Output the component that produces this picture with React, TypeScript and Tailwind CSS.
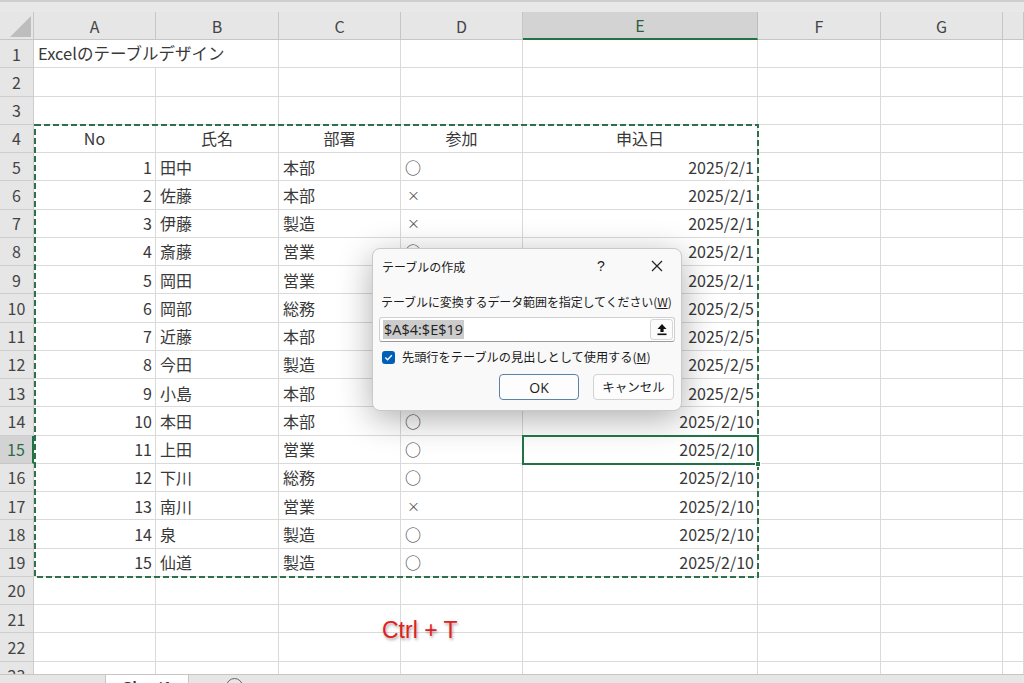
import React from "react";

type Align = "l" | "c" | "r";
type Cell = { t: string; a: Align };

const COLS = ["A", "B", "C", "D", "E", "F", "G", ""];

const people: [string, string, string, string][] = [
  ["田中", "本部", "○", "2025/2/1"],
  ["佐藤", "本部", "×", "2025/2/1"],
  ["伊藤", "製造", "×", "2025/2/1"],
  ["斎藤", "営業", "○", "2025/2/1"],
  ["岡田", "営業", "○", "2025/2/1"],
  ["岡部", "総務", "○", "2025/2/5"],
  ["近藤", "本部", "×", "2025/2/5"],
  ["今田", "製造", "○", "2025/2/5"],
  ["小島", "本部", "○", "2025/2/5"],
  ["本田", "本部", "○", "2025/2/10"],
  ["上田", "営業", "○", "2025/2/10"],
  ["下川", "総務", "○", "2025/2/10"],
  ["南川", "営業", "×", "2025/2/10"],
  ["泉", "製造", "○", "2025/2/10"],
  ["仙道", "製造", "○", "2025/2/10"],
];

// 行ごとのセル内容 (A〜E)
function rowCells(r: number): (Cell | null)[] {
  if (r === 1) return [{ t: "Excelのテーブルデザイン", a: "l" }, null, null, null, null];
  if (r === 4)
    return [
      { t: "No", a: "c" },
      { t: "氏名", a: "c" },
      { t: "部署", a: "c" },
      { t: "参加", a: "c" },
      { t: "申込日", a: "c" },
    ];
  if (r >= 5 && r <= 19) {
    const p = people[r - 5];
    return [
      { t: String(r - 4), a: "r" },
      { t: p[0], a: "l" },
      { t: p[1], a: "l" },
      { t: p[2], a: "l" },
      { t: p[3], a: "r" },
    ];
  }
  return [null, null, null, null, null];
}

const alignClass: Record<Align, string> = {
  l: "justify-start pl-[4px]",
  c: "justify-center",
  r: "justify-end pr-[3px]",
};

function Corner() {
  return (
    <div className="bg-[#e6e6e6] border-r border-b border-[#c6c6c6] relative">
      <svg width="34" height="28" className="absolute inset-0">
        <polygon points="31,4 31,25 10,25" fill="#bdbdbd" />
      </svg>
    </div>
  );
}

function UploadIcon() {
  return (
    <svg width="12" height="13" viewBox="0 0 12 13">
      <path d="M6 1 L10.5 6 H7.6 V9 H4.4 V6 H1.5 Z" fill="#111" />
      <rect x="1.5" y="10.5" width="9" height="1.6" fill="#111" />
    </svg>
  );
}

function Dialog() {
  return (
    <div className="absolute left-[372px] top-[248px] w-[310px] h-[163px] bg-[#f9f9f9] border border-[#c9c9c9] rounded-[8px] shadow-[0_8px_34px_rgba(0,0,0,0.32)] font-['Noto_Sans_CJK_JP',sans-serif] text-[#1b1b1b]">
      <div className="flex items-center h-[34px] pl-[9px] pr-[18px]">
        <div className="text-[12px] flex-1 pt-[1px]">テーブルの作成</div>
        <div className="text-[14px] w-[20px] text-center mr-[40px] font-['Liberation_Sans',sans-serif]">?</div>
        <svg width="12" height="12" viewBox="0 0 12 12">
          <path d="M1 1 L11 11 M11 1 L1 11" stroke="#222" strokeWidth="1.2" />
        </svg>
      </div>
      <div className="pl-[8px] mt-[11px] text-[12px] leading-[16px] whitespace-nowrap tracking-[-0.1px]">
        テーブルに変換するデータ範囲を指定してください(<span className="underline">W</span>)
      </div>
      <div className="mx-[6px] mt-[7px] h-[25px] bg-white border border-[#cfcfcf] border-b-[#9a9a9a] rounded-[3px] flex items-center">
        <div className="flex-1 pl-[3px] flex items-center">
          <span className="bg-[#cccccc] text-[14.5px] leading-[19px] px-[1px] font-['Open_Sans',sans-serif] text-[#222]">$A$4:$E$19</span>
        </div>
        <div className="w-[23px] h-[21px] mr-[1px] border border-[#d6d6d6] rounded-[3px] bg-[#fbfbfb] flex items-center justify-center">
          <UploadIcon />
        </div>
      </div>
      <div className="flex items-center pl-[9px] mt-[7px] gap-[7px]">
        <div className="w-[13px] h-[13px] rounded-[3px] bg-[#005fb8] flex items-center justify-center">
          <svg width="9" height="9" viewBox="0 0 9 9">
            <path d="M1.3 4.6 L3.5 6.8 L7.8 2.2" stroke="white" strokeWidth="1.4" fill="none" />
          </svg>
        </div>
        <div className="text-[12.2px] leading-[16px] whitespace-nowrap">
          先頭行をテーブルの見出しとして使用する(<span className="underline">M</span>)
        </div>
      </div>
      <div className="flex justify-end gap-[14px] pr-[7px] mt-[9px]">
        <div className="w-[80px] h-[26px] rounded-[4px] bg-[#fdfdfd] border border-[#5b82ab] flex items-center justify-center text-[14px] font-['Open_Sans',sans-serif]">
          OK
        </div>
        <div className="w-[81px] h-[26px] rounded-[4px] bg-[#fdfdfd] border border-[#d3d3d3] flex items-center justify-center text-[12.5px]">
          キャンセル
        </div>
      </div>
    </div>
  );
}

export default function App() {
  const rowNums = Array.from({ length: 23 }, (_, i) => i + 1);

  return (
    <div className="relative w-[1024px] h-[683px] overflow-hidden bg-white flex flex-col font-['Noto_Sans_CJK_JP',sans-serif] text-[#383838]">
      {/* 上部のリボン端 */}
      <div className="h-[12px] shrink-0 bg-[#e8e8e8] border-t-2 border-[#cfcfcf]" />

      {/* シート */}
      <div className="relative flex-1 overflow-hidden">
        <div className="grid grid-cols-[34px_122px_123px_122px_122px_235px_123px_122px_1fr] grid-rows-[28px] auto-rows-[28.25px]">
          <Corner />
          {COLS.map((c) =>
            c === "E" ? (
              <div key={c} className="bg-[#d3d3d3] border-r border-[#bdbdbd] border-b-2 border-b-[#217346] flex items-center justify-center text-[16px] text-[#2d5e42]">
                {c}
              </div>
            ) : (
              <div key={c || "H"} className="bg-[#e6e6e6] border-r border-b border-[#c6c6c6] flex items-center justify-center text-[16px] text-[#444]">
                {c}
              </div>
            )
          )}

          {rowNums.map((r) => {
            const cells = rowCells(r);
            return (
              <React.Fragment key={r}>
                {r === 15 ? (
                  <div className="bg-[#d3d3d3] border-b border-[#c6c6c6] border-r-2 border-r-[#217346] flex items-center justify-center text-[16px] text-[#2d6a48]">
                    {r}
                  </div>
                ) : (
                  <div className="bg-[#e6e6e6] border-r border-b border-[#cdcdcd] flex items-center justify-center text-[16px] text-[#444]">
                    {r}
                  </div>
                )}
                {COLS.map((c, ci) => {
                  const cell = ci < 5 ? cells[ci] : null;
                  const active = r === 15 && c === "E";
                  const overflowRow = r === 1 && c === "A";
                  return (
                    <div
                      key={c || "H"}
                      className={
                        active
                          ? "relative border-r border-b border-[#dadada] outline-2 outline-[#217346] -outline-offset-1 z-10 flex items-center justify-end pr-[3px] text-[16px]"
                          : overflowRow
                          ? "relative border-b border-[#dadada] flex items-center pl-[4px] text-[16.5px] whitespace-nowrap overflow-visible z-10"
                          : cell
                          ? `border-r border-b border-[#dadada] flex items-center whitespace-nowrap text-[16px] ${alignClass[cell.a]}`
                          : "border-r border-b border-[#dadada]"
                      }
                    >
                      {cell ? (
                        cell.t === "×" ? (
                          <span className="text-[13px] text-[#555] pl-[2px]">×</span>
                        ) : (
                          cell.t
                        )
                      ) : null}
                      {active && (
                        <span className="absolute right-[-4px] bottom-[-4px] w-[6px] h-[6px] bg-[#217346] border border-white" />
                      )}
                    </div>
                  );
                })}
              </React.Fragment>
            );
          })}
        </div>

        {/* コピー範囲の点線 */}
        <svg className="absolute left-[34px] top-[112px] pointer-events-none" width="725" height="454">
          <rect x="1" y="1" width="723" height="452" fill="none" stroke="#2f6f4c" strokeWidth="2" strokeDasharray="6 3" />
        </svg>

        {/* 注釈 */}
        <div className="absolute left-[382px] top-[607px] text-[23px] leading-none text-[#e3201b] font-['Liberation_Sans',sans-serif] [text-shadow:1px_2px_3px_rgba(0,0,0,0.35)]">
          Ctrl + T
        </div>
      </div>

      {/* シートタブ */}
      <div className="h-[9px] shrink-0 bg-[#e6e6e6] border-t border-[#c6c6c6] flex overflow-hidden">
        <div className="w-[106px] border-r border-[#c6c6c6]" />
        <div className="w-[82px] bg-white -mt-[1px] flex justify-center text-[15px] leading-[18px] text-[#333] font-['Liberation_Sans',sans-serif]">
          <span className="mt-[4px] font-bold">Sheet1</span>
        </div>
        <div className="w-[38px] border-l border-[#c6c6c6]" />
        <div className="w-[17px] h-[17px] rounded-full border border-[#666] mt-[3px]" />
      </div>

      <Dialog />
    </div>
  );
}
